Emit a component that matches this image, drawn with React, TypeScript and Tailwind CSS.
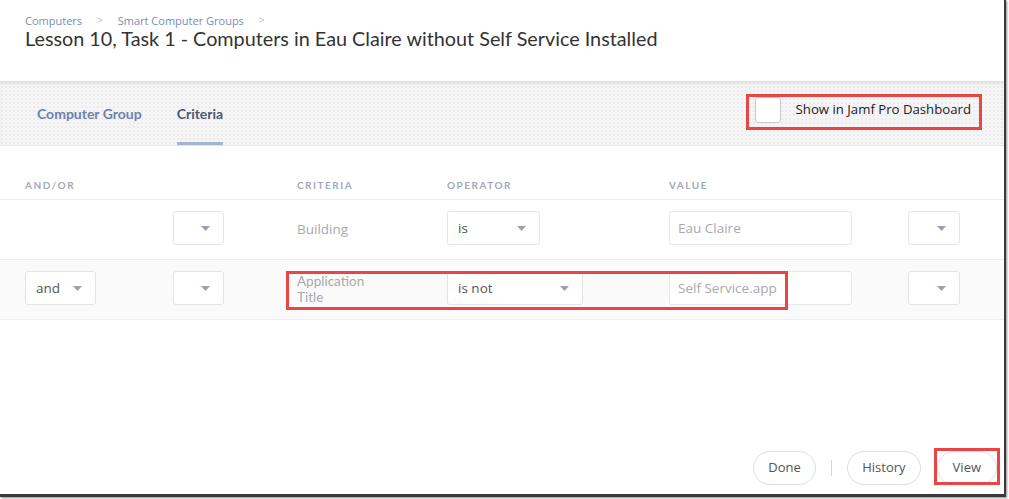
import React from "react";

const Caret = () => (
  <svg width="9" height="5" viewBox="0 0 9 5" className="shrink-0">
    <path d="M0 0 H9 L4.5 5 Z" fill="#9ca1b1" />
  </svg>
);

const Select = ({ label, w }: { label?: string; w: string }) => (
  <div
    className={`${w} h-[34px] bg-white border border-[#e3e4e8] rounded-[3px] flex items-center justify-between pl-[10px] pr-[13px] text-[13.5px] text-[#555]`}
  >
    <span>{label ?? ""}</span>
    <Caret />
  </div>
);

const Input = ({ value }: { value: string }) => (
  <div className="w-[183px] h-[34px] bg-white border border-[#e6e7ea] rounded-[3px] flex items-center pl-[8px] text-[13.5px] text-[#a9a9ad]">
    {value}
  </div>
);

export default function App() {
  return (
    <div
      className="w-[1009px] h-[499px] bg-white overflow-hidden"
      style={{ fontFamily: "'Open Sans', Lato, sans-serif" }}
    >
      <div className="relative w-[1006px] h-[497px] border-r-[2px] border-b-[3px] border-[#3a3a3a] shadow-[1px_1px_2px_rgba(0,0,0,0.45)] flex flex-col bg-white">
        {/* Header */}
        <div className="h-[81px] pl-[25px] pt-[13px] shrink-0">
          <div className="flex items-center text-[11px] text-[#7b8db3] leading-[15px]">
            <span>Computers</span>
            <span className="mx-[15px] text-[#b8bcc8] text-[10px]">&gt;</span>
            <span>Smart Computer Groups</span>
            <span className="ml-[15px] text-[#b8bcc8] text-[10px]">&gt;</span>
          </div>
          <div
            className="text-[19.8px] leading-[22px] text-[#333] -mt-[1px]"
            style={{ fontFamily: "Lato, sans-serif" }}
          >
            Lesson 10, Task 1 - Computers in Eau Claire without Self Service Installed
          </div>
        </div>

        {/* Tabs band */}
        <div className="relative h-[65px] shrink-0 bg-[#f5f5f6] bg-[image:radial-gradient(circle,#ebebed_0.8px,transparent_1.3px)] bg-[size:4px_4px] shadow-[inset_0_4px_5px_-3px_rgba(0,0,0,0.12)] border-b border-[#e6e6e8] flex items-stretch pl-[37px]">
          <div
            className="flex items-center text-[14px] font-bold text-[#6e82ad]"
            style={{ fontFamily: "Lato, sans-serif" }}
          >
            Computer Group
          </div>
          <div
            className="relative ml-[35px] flex items-center text-[14px] font-bold text-[#4c5874]"
            style={{ fontFamily: "Lato, sans-serif" }}
          >
            Criteria
            <div className="absolute left-0 right-0 bottom-0 h-[3px] bg-[#a3b4d4]" />
          </div>
          <div className="flex-1" />
          <div className="flex items-center pr-[33px] pb-[7px]">
            <div className="w-[26px] h-[26px] bg-white border border-[#c9ccd4] rounded-[3px]" />
            <span className="ml-[15px] text-[13.2px] text-[#222]">Show in Jamf Pro Dashboard</span>
          </div>
          <div className="absolute left-[746px] top-[13px] w-[236px] h-[36px] border-[3px] border-[#e84545]" />
        </div>

        {/* Table header */}
        <div
          className="h-[54px] shrink-0 grid grid-cols-[148px_124px_150px_222px_239px_1fr] pl-[25px] items-end pb-[6px] text-[10px] font-bold tracking-[0.15em] text-[#a4a9b8] border-b border-[#eeeef0]"
          style={{ fontFamily: "Lato, sans-serif" }}
        >
          <span>AND/OR</span>
          <span />
          <span>CRITERIA</span>
          <span>OPERATOR</span>
          <span>VALUE</span>
          <span />
        </div>

        {/* Row 1 */}
        <div className="h-[60px] shrink-0 grid grid-cols-[148px_124px_150px_222px_239px_1fr] pl-[25px] items-center pb-[3px] border-b border-[#eeeef0]">
          <span />
          <Select w="w-[51px]" />
          <span className="text-[13.5px] text-[#a9a9ad] pt-[3px]">Building</span>
          <Select w="w-[93px]" label="is" />
          <Input value="Eau Claire" />
          <Select w="w-[52px]" />
        </div>

        {/* Row 2 */}
        <div className="relative h-[60px] shrink-0 grid grid-cols-[148px_124px_150px_222px_239px_1fr] pl-[25px] items-center pb-[3px] bg-[#fafafb] border-b border-[#eeeef0]">
          <Select w="w-[71px]" label="and" />
          <Select w="w-[51px]" />
          <div
            className="flex flex-col text-[13.5px] text-[#a9a9ad] pt-[1px]"
            style={{ fontFamily: "Lato, sans-serif" }}
          >
            <span className="leading-[16px]">Application</span>
            <span className="leading-[16px]">Title</span>
          </div>
          <Select w="w-[136px]" label="is not" />
          <Input value="Self Service.app" />
          <Select w="w-[52px]" />
          <div className="absolute left-[286px] top-[11px] w-[502px] h-[39px] border-[3px] border-[#e84545]" />
        </div>

        <div className="flex-1" />

        {/* Footer buttons */}
        <div className="relative flex items-center justify-end pr-[7px] pb-[9px] shrink-0">
          <button className="h-[34px] px-[14.5px] rounded-full border border-[#dcdde1] bg-white text-[13px] text-[#555]">
            Done
          </button>
          <div className="mx-[15px] w-px h-[16px] bg-[#d4d5d9]" />
          <button className="h-[34px] px-[14px] rounded-full border border-[#dcdde1] bg-white text-[13px] text-[#555]">
            History
          </button>
          <button className="ml-[16px] h-[34px] px-[15px] rounded-full border border-[#dcdde1] bg-white text-[13px] text-[#555]">
            View
          </button>
          <div className="absolute left-[934px] top-[-3px] w-[66px] h-[37px] border-[3px] border-[#e84545]" />
        </div>
      </div>
    </div>
  );
}
